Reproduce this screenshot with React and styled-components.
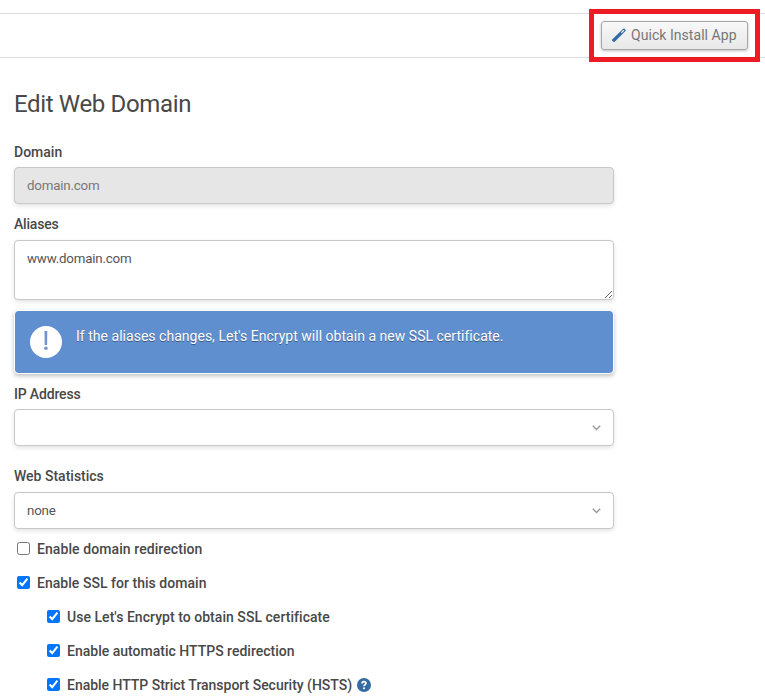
import React from 'react';
import styled, { createGlobalStyle, css } from 'styled-components';

const GlobalStyle = createGlobalStyle`
  * { box-sizing: border-box; }
  body {
    margin: 0;
    overflow: hidden;
    background: #fff;
    color: #484848;
    font-family: Roboto, "Liberation Sans", sans-serif;
    font-size: 14px;
  }
`;

const Page = styled.div`
  width: 765px;
  height: 700px;
  padding-top: 13px;
  overflow: hidden;
`;

const Toolbar = styled.header`
  position: relative;
  display: flex;
  justify-content: flex-end;
  height: 45px;
  padding: 7px 17px 0 0;
  border-top: 1px solid #dcdcdc;
  border-bottom: 1px solid #dcdcdc;
`;

const ToolbarButton = styled.button`
  display: flex;
  align-items: center;
  width: 147px;
  height: 29px;
  padding: 0 0 1px 9px;
  gap: 4px;
  border: 1px solid #a6a6a6;
  border-radius: 3px;
  background: linear-gradient(#f8f8f8, #e8e8e8);
  box-shadow: 0 1px 3px rgba(0, 0, 0, 0.25);
  color: #777;
  font: 14px Roboto, sans-serif;
  letter-spacing: 0.05px;
  white-space: nowrap;
`;

const Highlight = styled.div`
  position: absolute;
  top: -5px;
  right: 5px;
  width: 171px;
  height: 53px;
  border: 5px solid #ed1c24;
  pointer-events: none;
`;

const Form = styled.main`
  display: flex;
  flex-direction: column;
  width: 614px;
  padding-left: 14px;
`;

const Title = styled.h1`
  margin: 31px 0 33px;
  font-size: 24px;
  line-height: 30px;
  font-weight: 400;
  letter-spacing: -0.35px;
`;

const Label = styled.label`
  height: 20px;
  margin-top: ${(p) => p.$top}px;
  margin-bottom: ${(p) => p.$bottom}px;
  line-height: 20px;
  font-weight: 500;
  letter-spacing: ${(p) => p.$tracking || 0}px;
`;

const control = css`
  width: 600px;
  border: 1px solid #c8c8c8;
  border-radius: 4px;
  background: #fff;
  box-shadow: 0 2px 4px rgba(0, 0, 0, 0.11);
  color: #555;
  font: 13.33px Roboto, sans-serif;
  letter-spacing: -0.2px;
  outline: none;
`;

const Input = styled.input`
  ${control}
  height: 37px;
  padding: 0 12px;
  background: #e6e6e6;
  color: #777;
`;

const TextArea = styled.textarea`
  ${control}
  display: block;
  height: 60px;
  padding: 9px 12px;
  line-height: 18px;
  resize: vertical;
`;

const Select = styled.div`
  ${control}
  display: flex;
  align-items: center;
  justify-content: space-between;
  height: 37px;
  padding: 0 12px;
`;

const Alert = styled.div`
  display: flex;
  gap: 14px;
  width: 600px;
  height: 64px;
  margin-top: 10px;
  padding: 15px;
  border: 1px solid #fff;
  border-radius: 4px;
  background: #608fcf;
  background-clip: padding-box;
  box-shadow: 0 2px 4px rgba(0, 0, 0, 0.25);
  color: #fff;
  line-height: 20px;
  letter-spacing: 0.023px;
  text-shadow: 0 1px 0 rgba(0, 0, 0, 0.4);
`;

const AlertText = styled.p`
  margin: 0;
`;

const Options = styled.div`
  display: flex;
  flex-direction: column;
  gap: 14px;
  margin-top: 10px;
`;

const Option = styled.label`
  display: flex;
  align-items: center;
  height: 20px;
  margin-left: ${(p) => (p.$nested ? 33 : 3)}px;
  font-weight: 500;
  letter-spacing: ${(p) => p.$tracking}px;
  white-space: nowrap;
`;

const Checkbox = styled.input`
  width: 13px;
  height: 13px;
  margin: 0 7px 2px 0;
`;

const HelpIcon = styled.svg`
  flex: none;
  margin-left: 5px;
`;

const Wand = () => (
  <svg width="16" height="16" viewBox="0 0 16 16" fill="none" aria-hidden="true">
    <path
      d="M1.2 12.5 L12.2 1.7 Q12.8 1.1 13.4 1.7 L14.5 2.8 Q15.1 3.4 14.5 4 L3.7 14.8 Q3.1 15.4 2.5 14.8 L1.2 13.7 Q0.6 13.1 1.2 12.5 Z"
      fill="#306ba6"
    />
    <path d="M10.3 5.8 L12.9 3.2" stroke="#dce5ef" strokeWidth="1.3" />
  </svg>
);

const Chevron = () => (
  <svg width="9" height="6" viewBox="0 0 9 6" fill="none" aria-hidden="true">
    <path d="M0.8 0.8 L4.5 4.4 L8.2 0.8" stroke="#999" strokeWidth="1.4" />
  </svg>
);

const Exclamation = () => (
  <svg width="32" height="32" viewBox="0 0 32 32" aria-hidden="true">
    <circle cx="16" cy="16" r="16" fill="#fff" />
    <path d="M14.5 5 h2.8 l-0.2 14 h-2.4 z" fill="#7394cd" />
    <circle cx="15.9" cy="22.2" r="1.8" fill="#7394cd" />
  </svg>
);

const Help = () => (
  <HelpIcon width="14" height="14" viewBox="0 0 14 14" aria-hidden="true">
    <circle cx="7" cy="7" r="7" fill="#346ba0" />
    <path
      d="M5 5.5 C5 3.1 9 3.1 9 5.3 C9 6.8 7 6.6 7 8.2"
      fill="none"
      stroke="#fff"
      strokeWidth="1.7"
    />
    <circle cx="7" cy="10.3" r="1" fill="#fff" />
  </HelpIcon>
);

const options = [
  { text: 'Enable domain redirection', tracking: 0.082 },
  { text: 'Enable SSL for this domain', tracking: 0.034, checked: true },
  { text: "Use Let's Encrypt to obtain SSL certificate", tracking: 0.04, checked: true, nested: true },
  { text: 'Enable automatic HTTPS redirection', tracking: 0.004, checked: true, nested: true },
  { text: 'Enable HTTP Strict Transport Security (HSTS)', tracking: -0.021, checked: true, nested: true, help: true },
];

export default function App() {
  return (
    <>
      <GlobalStyle />
      <Page>
        <Toolbar>
          <ToolbarButton>
            <Wand />
            Quick Install App
          </ToolbarButton>
          <Highlight />
        </Toolbar>
        <Form>
          <Title>Edit Web Domain</Title>
          <Label $top={-10} $bottom={5}>Domain</Label>
          <Input disabled defaultValue="domain.com" />
          <Label $top={10} $bottom={6} $tracking={-0.2}>Aliases</Label>
          <TextArea defaultValue="www.domain.com" spellCheck={false} />
          <Alert>
            <Exclamation />
            <AlertText>If the aliases changes, Let's Encrypt will obtain a new SSL certificate.</AlertText>
          </Alert>
          <Label $top={10} $bottom={5} $tracking={-0.17}>IP Address</Label>
          <Select>
            <span />
            <Chevron />
          </Select>
          <Label $top={20} $bottom={6}>Web Statistics</Label>
          <Select>
            none
            <Chevron />
          </Select>
          <Options>
            {options.map((o) => (
              <Option key={o.text} $nested={o.nested} $tracking={o.tracking}>
                <Checkbox type="checkbox" defaultChecked={o.checked} />
                {o.text}
                {o.help && <Help />}
              </Option>
            ))}
          </Options>
        </Form>
      </Page>
    </>
  );
}
